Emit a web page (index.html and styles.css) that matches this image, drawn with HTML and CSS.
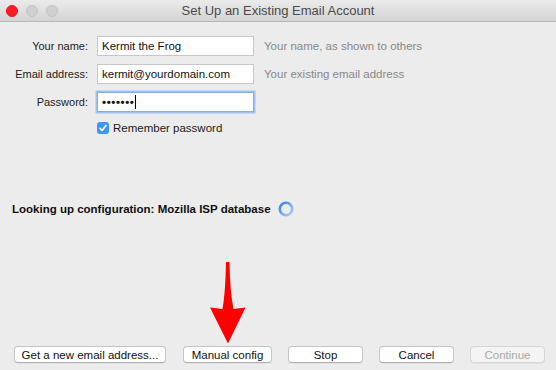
FILE: index.html
```html
<!DOCTYPE html>
<html lang="en">
<head>
    <meta charset="UTF-8">
    <title>Set Up an Existing Email Account</title>
    <link rel="stylesheet" href="styles.css">
</head>
<body>
    <div class="titlebar">
        <div class="lights">
            <span class="light close"></span>
            <span class="light"></span>
            <span class="light"></span>
        </div>
        <div class="title">Set Up an Existing Email Account</div>
        <div></div>
    </div>

    <div class="content">
        <div class="form">
            <label class="label">Your name:</label>
            <div class="input">Kermit the Frog</div>
            <div class="hint">Your name, as shown to others</div>

            <label class="label">Email address:</label>
            <div class="input">kermit@yourdomain.com</div>
            <div class="hint">Your existing email address</div>

            <label class="label">Password:</label>
            <div class="input focused"><span class="dots">&bull;&bull;&bull;&bull;&bull;&bull;&bull;</span><span class="caret"></span></div>
            <div></div>

            <div></div>
            <div class="remember">
                <span class="checkbox">
                    <svg width="12" height="12" viewBox="0 0 12 12"><path d="M3 6.3 L5.1 8.5 L9 3.5" fill="none" stroke="#fff" stroke-width="1.7" stroke-linecap="round" stroke-linejoin="round"/></svg>
                </span>
                Remember password
            </div>
        </div>

        <div class="status">
            <span>Looking up configuration: Mozilla ISP database</span>
            <svg class="spinner" width="16" height="16" viewBox="0 0 16 16">
                <defs>
                    <linearGradient id="spin" x1="0" y1="0" x2="1" y2="1">
                        <stop offset="0" stop-color="#2f7fe8"/>
                        <stop offset="1" stop-color="#a9d2fb"/>
                    </linearGradient>
                </defs>
                <circle cx="8" cy="8" r="6.2" fill="none" stroke="url(#spin)" stroke-width="2.6"/>
            </svg>
        </div>

        <div class="buttons">
            <button class="btn wide">Get a new email address...</button>
            <button class="btn manual">Manual config</button>
            <button class="btn">Stop</button>
            <button class="btn">Cancel</button>
            <button class="btn" disabled>Continue</button>
        </div>
    </div>

    <svg class="arrow" width="556" height="370" viewBox="0 0 556 370">
        <path d="M226 262 L229.5 262 Q230 292 233.5 309 L245.5 307.5 L228 343.5 L210 307.5 L222.5 309 Q225.5 292 226 262 Z" fill="#ff0000"/>
    </svg>
</body>
</html>
```

FILE: styles.css
```css
body {
    margin: 0;
    width: 556px;
    height: 370px;
    background-color: #ececec;
    font-family: "Liberation Sans", Arial, sans-serif;
    font-size: 11.5px;
    color: #1a1a1a;
    display: flex;
    flex-direction: column;
    position: relative;
    overflow: hidden;
}
.titlebar {
    height: 21px;
    flex: none;
    border-bottom: 1px solid #b8b8b8;
    background: linear-gradient(#ebebeb, #d4d4d4);
    display: grid;
    grid-template-columns: 1fr auto 1fr;
    align-items: center;
}
.lights {
    display: flex;
    gap: 8px;
    padding-left: 6px;
}
.light {
    flex: none;
    box-sizing: border-box;
    width: 12px;
    height: 12px;
    border-radius: 50%;
    background-color: #d0d0d0;
    border: 1px solid #c2c2c2;
}
.light.close {
    background-color: #fc1c24;
    border-color: #e8161e;
}
.title {
    font-size: 13px;
    color: #4a4a4a;
}
.content {
    flex: 1;
    display: flex;
    flex-direction: column;
}
.form {
    display: grid;
    grid-template-columns: 88px 157px 1fr;
    grid-template-rows: 20px 20px 20px 14px;
    column-gap: 9px;
    row-gap: 8px;
    margin-top: 14px;
    align-items: center;
}
.label {
    font-size: 11px;
    text-align: right;
    color: #222;
}
.input {
    height: 18px;
    line-height: 18px;
    background-color: #fff;
    border: 1px solid #c8c8c8;
    padding-left: 4px;
    color: #111;
    display: flex;
    align-items: center;
}
.input.focused {
    border-color: #84aee8;
    box-shadow: 0 0 0 1.5px #9ec3f2;
}
.dots {
    font-size: 11.5px;
    font-weight: bold;
    letter-spacing: 0.6px;
}
.caret {
    width: 1px;
    height: 14px;
    background-color: #000;
    margin-left: 1px;
}
.hint {
    margin-left: 1px;
    color: #888;
}
.remember {
    display: flex;
    align-items: center;
    gap: 4px;
    margin-top: 2px;
    grid-column: 2 / 4;
}
.checkbox {
    width: 12px;
    height: 12px;
    border-radius: 3px;
    background-color: #3a96fb;
    display: flex;
}
.status {
    margin-top: 67px;
    padding-left: 12px;
    display: flex;
    align-items: center;
    gap: 7px;
    font-weight: bold;
    font-size: 11.5px;
    color: #111;
    height: 16px;
}
.buttons {
    margin-top: auto;
    margin-bottom: 7px;
    display: flex;
    gap: 16px;
    padding-left: 14px;
}
.btn {
    width: 75px;
    height: 17px;
    padding: 0;
    font-family: inherit;
    font-size: 11.5px;
    color: #111;
    background-color: #fff;
    border: 1px solid #c4c4c4;
    border-bottom-color: #b0b0b0;
    border-radius: 4px;
    box-shadow: 0 0.5px 0.5px rgba(0,0,0,0.08);
}
.btn.wide {
    width: 152px;
    margin-right: 1px;
}
.btn.manual {
    width: 89px;
}
.btn:disabled {
    background-color: #f4f4f4;
    color: #a8a8a8;
    border-color: #d6d6d6;
}
.arrow {
    position: absolute;
    left: 0;
    top: 0;
    pointer-events: none;
}
```
